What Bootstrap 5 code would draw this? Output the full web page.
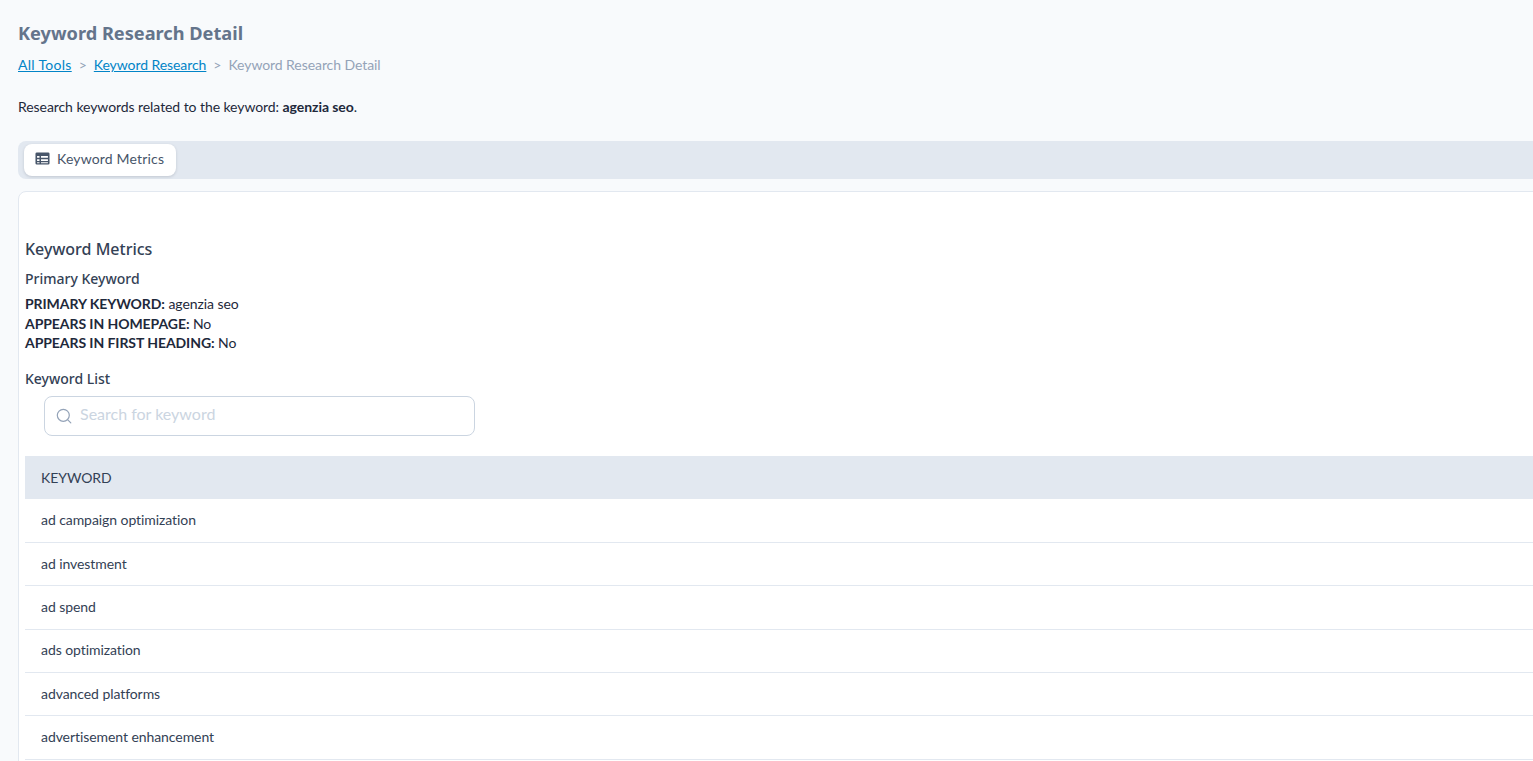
<!DOCTYPE html>
<html lang="en">
<head>
<meta charset="utf-8">
<title>Keyword Research Detail</title>
<link href="https://cdn.jsdelivr.net/npm/bootstrap@5.3.0/dist/css/bootstrap.min.css" rel="stylesheet">
<style>
html, body { height: 100%; overflow: hidden; }
body { background: #f8fafc; font-family: "Lato", "Liberation Sans", sans-serif; font-size: 14px; color: #1e293b; letter-spacing: -.07px; }
.pg-wrap { width: 1600px; padding: 19px 0 0 18px; }
.pg-title { font-family: "Noto Sans", sans-serif; font-size: 18.2px; font-weight: 700; line-height: 28px; color: #64748b; margin: 0 0 8px; letter-spacing: 0; }
.crumbs { font-size: 14px; line-height: 20px; color: #94a3b8; gap: 7px; margin-bottom: 22px; }
.crumbs a { color: #0284c7; }
.crumbs a.crumb-first { letter-spacing: .3px; }
.intro { line-height: 20px; margin: 0 0 24px; }
.tab-bar { background: #e2e8f0; height: 38px; border-radius: 8px 0 0 8px; padding: 3px 6px; }
.tab-pill { background: #fff; color: #475569; height: 32px; padding: 0 12px 3px 11px; border-radius: 8px; box-shadow: 0 1px 3px rgba(15,23,42,.15); gap: 7px; letter-spacing: .17px; font-size: 14px; }
.tab-pill svg { width: 15px; height: 15px; }
.panel { background: #fff; border: 1px solid #e2e8f0; border-radius: 8px 0 0 0; margin-top: 12px; padding: 47px 6px 0; }
.sec-h { font-family: "Noto Sans", sans-serif; color: #334155; font-weight: 500; margin: 0; letter-spacing: 0; }
.sec-h1 { font-size: 16px; line-height: 20px; margin-bottom: 10px; }
.sec-h2 { font-size: 14px; line-height: 20px; }
.facts { line-height: 19.5px; margin: 5px 0 16px; }
.facts b { font-weight: 700; }
.search-box { width: 431px; height: 40px; margin: 7px 0 20px 19px; border: 1px solid #cbd5e1; border-radius: 8px; padding: 0 11px; gap: 8px; background: #fff; }
.search-box svg { width: 16px; height: 16px; flex: none; }
.search-box input { border: 0; outline: 0; width: 100%; font-size: 16px; padding: 0 0 3px; background: transparent; color: #1e293b; letter-spacing: 0; }
.search-box input::placeholder { color: #cbd5e1; opacity: 1; }
.kw-table { margin: 0; --bs-table-bg: transparent; font-size: 14px; }
.kw-table th { background: #e2e8f0; font-weight: 400; color: #334155; height: 43.5px; padding: 0 16px; vertical-align: middle; border: 0; }
.kw-table td { height: 43.38px; padding: 0 16px 2px; vertical-align: middle; color: #334155; border-bottom: 1px solid #e2e8f0; }
.kw-table tbody { border-top: 0; }
</style>
</head>
<body>
<div class="pg-wrap">
  <h1 class="pg-title">Keyword Research Detail</h1>
  <nav class="crumbs d-flex">
    <a href="#" class="crumb-first">All Tools</a><span>&gt;</span><a href="#">Keyword Research</a><span>&gt;</span><span>Keyword Research Detail</span>
  </nav>
  <p class="intro">Research keywords related to the keyword: <b>agenzia seo</b>.</p>
  <div class="tab-bar d-flex">
    <div class="tab-pill d-inline-flex align-items-center">
      <svg viewBox="0 0 16 16" fill="#475569"><path fill-rule="evenodd" d="M2 1.5h12A1.5 1.5 0 0 1 15.5 3v10a1.5 1.5 0 0 1-1.5 1.5H2A1.5 1.5 0 0 1 .5 13V3A1.5 1.5 0 0 1 2 1.5zM2.2 5.2v2h2.6v-2zm4.2 0v2h7.4v-2zM2.2 8.8v1.9h2.6V8.8zm4.2 0v1.9h7.4V8.8zM2.2 12v1h2.6v-1zm4.2 0v1h7.4v-1z"/></svg>
      <span>Keyword Metrics</span>
    </div>
  </div>
  <div class="panel">
    <h2 class="sec-h sec-h1">Keyword Metrics</h2>
    <h3 class="sec-h sec-h2">Primary Keyword</h3>
    <div class="facts">
      <div><b>PRIMARY KEYWORD:</b> agenzia seo</div>
      <div><b>APPEARS IN HOMEPAGE:</b> No</div>
      <div><b>APPEARS IN FIRST HEADING:</b> No</div>
    </div>
    <h3 class="sec-h sec-h2">Keyword List</h3>
    <div class="search-box d-flex align-items-center">
      <svg viewBox="0 0 16 16" fill="none" stroke="#94a3b8" stroke-width="1.2" stroke-linecap="round"><circle cx="7.3" cy="7.3" r="6"/><path d="M11.8 11.8 14.8 14.8"/></svg>
      <input type="text" placeholder="Search for keyword">
    </div>
    <table class="table kw-table">
      <thead><tr><th>KEYWORD</th></tr></thead>
      <tbody>
        <tr><td>ad campaign optimization</td></tr>
        <tr><td>ad investment</td></tr>
        <tr><td>ad spend</td></tr>
        <tr><td>ads optimization</td></tr>
        <tr><td>advanced platforms</td></tr>
        <tr><td>advertisement enhancement</td></tr>
        <tr><td>&nbsp;</td></tr>
      </tbody>
    </table>
  </div>
</div>
<script src="https://cdn.jsdelivr.net/npm/bootstrap@5.3.0/dist/js/bootstrap.bundle.min.js"></script>
</body>
</html>
